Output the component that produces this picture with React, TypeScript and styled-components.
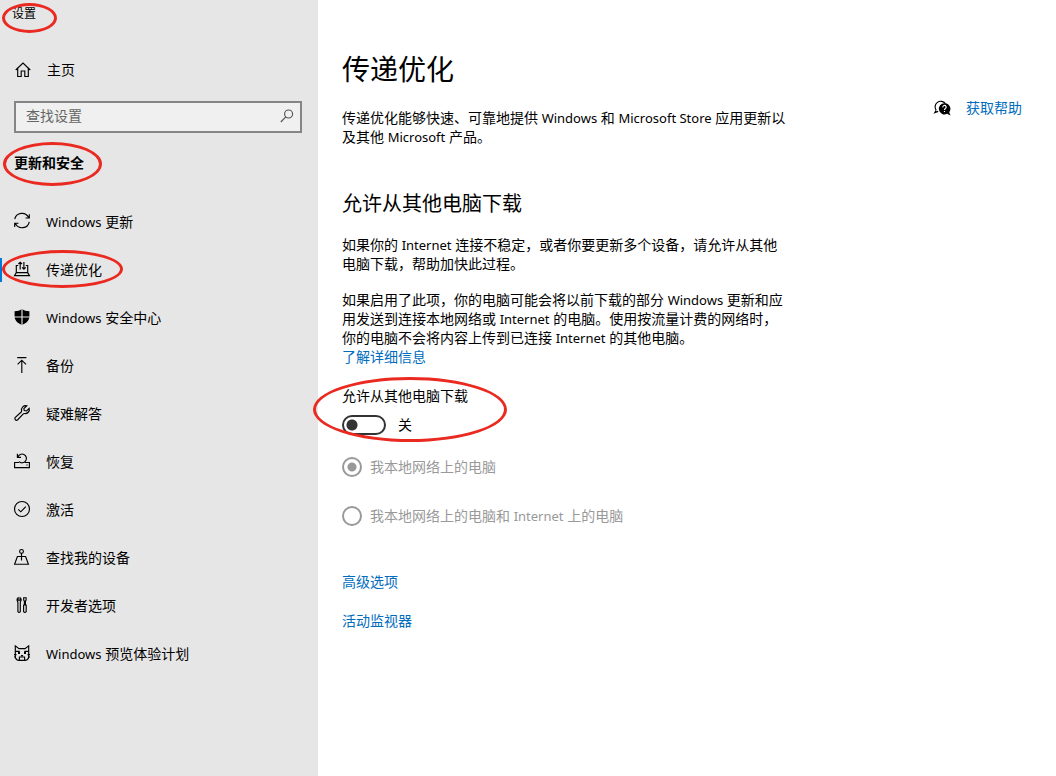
import React from 'react';
import styled, { createGlobalStyle, css } from 'styled-components';

const GlobalStyle = createGlobalStyle`
  *, *::before, *::after { box-sizing: border-box; }
  body {
    margin: 0;
    background: #fff;
    color: #000;
    font: 14px/20px "Open Sans", "Noto Sans CJK SC", sans-serif;
  }
  h1, h2, p { margin: 0; font-weight: 400; }
`;

const Page = styled.div`
  display: flex;
  min-height: 100vh;
`;

const Sidebar = styled.aside`
  flex: 0 0 318px;
  background: #e6e6e6;
`;

const WindowTitle = styled.div`
  position: relative;
  padding: 4px 12px 0;
  font-size: 12px;
`;

const HomeLink = styled.a`
  display: flex;
  align-items: center;
  gap: 16px;
  margin-top: 32px;
  padding: 4px 15px;
  color: inherit;
  text-decoration: none;
`;

const SearchBox = styled.label`
  display: flex;
  align-items: center;
  height: 32px;
  margin: 17px 16px 0 14px;
  padding: 0 5px 2px 10px;
  border: 2px solid #858585;
  background: #f0f0f0;
  color: #555;
`;

const SearchInput = styled.input`
  flex: 1;
  min-width: 0;
  padding: 0;
  border: 0;
  outline: 0;
  background: transparent;
  font: inherit;
  &::placeholder { color: #666; opacity: 1; }
`;

const SectionName = styled.h2`
  position: relative;
  padding: 20px 14px 25px;
  && { font-weight: 700; }
  font-size: 14px;
`;

const NavItem = styled.a<{ $active?: boolean }>`
  position: relative;
  display: flex;
  align-items: center;
  gap: 16px;
  height: 48px;
  padding: 0 14px;
  color: inherit;
  text-decoration: none;
  ${p => p.$active && css`
    &::before {
      content: "";
      position: absolute;
      left: 0;
      top: 12px;
      width: 2px;
      height: 24px;
      background: #0078d7;
    }
  `}
`;

const Icon = styled.svg`
  flex: none;
  width: 16px;
  height: 16px;
  overflow: visible;
  fill: none;
  stroke: currentColor;
  stroke-width: 1.15;
`;

const Latin = styled.span`
  font-family: "Noto Sans", sans-serif;
  font-size: 13px;
  line-height: 1;
`;

const Main = styled.main`
  flex: 1;
  display: flex;
  justify-content: space-between;
  align-items: flex-start;
  padding: 51px 34px 40px 24px;
`;

const Content = styled.div`
  white-space: nowrap;
`;

const Title = styled.h1`
  font-size: 28px;
  line-height: 36px;
`;

const Paragraph = styled.p<{ $gap: number }>`
  margin-top: ${p => p.$gap}px;
  line-height: 19px;
`;

const Subtitle = styled.h2`
  margin-top: 44px;
  font-size: 20px;
  line-height: 28px;
`;

const Link = styled.a`
  color: #006cbe;
  text-decoration: none;
`;

const ToggleGroup = styled.div`
  position: relative;
  margin-top: 20px;
`;

const ToggleLabel = styled.label`
  display: block;
`;

const ToggleRow = styled.div`
  display: flex;
  align-items: center;
  gap: 12px;
  margin-top: 9px;
`;

const Toggle = styled.input`
  appearance: none;
  width: 44px;
  height: 20px;
  margin: 0;
  border: 2px solid #333;
  border-radius: 10px;
  background: radial-gradient(circle at 8px 8px, #333 5px, transparent 6px);
  &:checked {
    border-color: #0078d7;
    background: radial-gradient(circle at 32px 8px, #fff 5px, #0078d7 6px);
  }
`;

const Options = styled.div`
  display: grid;
  gap: 29px;
  margin-top: 22px;
`;

const Option = styled.label`
  display: flex;
  align-items: center;
  gap: 8px;
  color: #999;
`;

const Radio = styled.input`
  appearance: none;
  width: 20px;
  height: 20px;
  margin: 0;
  border: 2px solid #999;
  border-radius: 50%;
  &:checked { background: radial-gradient(circle, #999 4px, transparent 5px); }
`;

const Links = styled.div`
  display: grid;
  justify-items: start;
  gap: 19px;
  margin-top: 46px;
`;

const Help = styled(Link)`
  display: flex;
  align-items: center;
  gap: 16px;
  margin-top: 47px;
  white-space: nowrap;
  svg { color: #000; }
`;

const Ring = styled.span<{ $x: number; $y: number; $w: number; $h: number }>`
  position: absolute;
  z-index: 1;
  left: ${p => p.$x}px;
  top: ${p => p.$y}px;
  width: ${p => p.$w}px;
  height: ${p => p.$h}px;
  border: 3px solid #ea2a20;
  border-radius: 50%;
  pointer-events: none;
`;

type NavEntry = { label: React.ReactNode; icon: React.ReactNode; active?: boolean };

const entries: NavEntry[] = [
  {
    label: <><Latin>Windows</Latin> 更新</>,
    icon: <path d="M.7 6.2A7.4 7.4 0 0 1 14.6 4.6M15.3 1.2V5H11.5M15.3 8.8A7.4 7.4 0 0 1 1.4 10.6M.7 14V10.2H4.5" />,
  },
  {
    label: '传递优化',
    active: true,
    icon: <path d="M4.2 4.5H2.3V11.6M11.8 4.5H13.7V11.6M2.3 11.6H13.7L15.5 14.6H.5ZM6.2 8.6V1.2M4.4 3L6.2 1.2L8 3M9.9 1V8.2M8.1 6.4L9.9 8.2L11.7 6.4" />,
  },
  {
    label: <><Latin>Windows</Latin> 安全中心</>,
    icon: (
      <>
        <path fill="currentColor" stroke="none" d="M8 0C6 1.5 3.5 2.2.6 2.2V7.5C.6 11.5 4 14.5 8 16C12 14.5 15.4 11.5 15.4 7.5V2.2C12.5 2.2 10 1.5 8 0Z" />
        <path stroke="#e6e6e6" d="M8 0V16M0 8H16" />
      </>
    ),
  },
  { label: '备份', icon: <path d="M3.2 .6H12.4M7.8 16V3.2M3.6 7.4L7.8 3.2L12 7.4" /> },
  {
    label: '疑难解答',
    icon: <path d="M12.8 .8A4.2 4.2 0 0 0 7.6 5.8C7.6 6.4 7.5 6.7 7.2 7L1.1 12.6A1.75 1.75 0 0 0 3.5 15L9.3 8.8C9.6 8.5 10 8.4 10.5 8.5A4.1 4.1 0 0 0 15.2 3.4L12.6 6L10.2 5.6L9.9 3.5Z" />,
  },
  {
    label: '恢复',
    icon: <path d="M5 9.5H.6V14.6H15.4V9.5H11M12.4 12H13.6M3.4 .8V4.4H7M3.8 4.2A4.4 4.4 0 1 1 5 8.6" />,
  },
  { label: '激活', icon: <><circle cx="8" cy="8" r="7.5" /><path d="M4.2 8.3L6.8 10.8L11.8 5.6" /></> },
  {
    label: '查找我的设备',
    icon: <><circle cx="7.5" cy="2.4" r="1.9" /><path d="M7.5 4.3V11.6M3.4 7.5H11.6L14.4 15.2H.6Z" /></>,
  },
  {
    label: '开发者选项',
    icon: <path d="M4.1 .7V3.2H6.1V.7C7.3 1.4 7.6 3.8 6.3 5V14.6Q5.1 16.2 3.9 14.6V5C2.6 3.8 2.9 1.4 4.1 .7ZM9.7 .7H12.1V3L11.4 4.2V8H10.4V4.2L9.7 3ZM9.2 8H12.6M9.6 8V14.6Q10.9 16.2 12.2 14.6V8" />,
  },
  {
    label: <><Latin>Windows</Latin> 预览体验计划</>,
    icon: (
      <>
        <path d="M1.3 12.5V.8L5 3.6H11L14.7 .8V12.5Q13.5 15.4 11 15.4H5Q2.5 15.4 1.3 12.5ZM1.3 6.4H5.6M10.4 6.4H14.7M5.4 15.2V12H10.6V15.2M0 9.6H2.5M13.5 9.6H16M0 12H2M14 12H16" />
        <path fill="currentColor" stroke="none" d="M4 6.6H6V9H4ZM10 6.6H12V9H10ZM6.6 10H9.4L8 12.2Z" />
      </>
    ),
  },
];

export default function App() {
  return (
    <Page>
      <GlobalStyle />
      <Sidebar>
        <WindowTitle>
          设置
          <Ring $x={2} $y={3} $w={55} $h={30} />
        </WindowTitle>
        <HomeLink href="#home">
          <Icon viewBox="0 0 16 16" aria-hidden="true">
            <path d="M.7 8L8 1L15.3 8M2.7 6.2V14.5H6.2V9H9.8V14.5H13.3V6.2" />
          </Icon>
          主页
        </HomeLink>
        <SearchBox>
          <SearchInput type="text" placeholder="查找设置" aria-label="查找设置" />
          <Icon viewBox="0 0 16 16" aria-hidden="true">
            <circle cx="9.6" cy="6" r="4" />
            <path d="M6.8 8.9L1.8 14" />
          </Icon>
        </SearchBox>
        <SectionName>
          更新和安全
          <Ring $x={3} $y={9} $w={99} $h={44} />
        </SectionName>
        <nav>
          {entries.map((entry, i) => (
            <NavItem key={i} href="#settings" $active={entry.active} aria-current={entry.active ? 'page' : undefined}>
              <Icon viewBox="0 1 16 16" aria-hidden="true">{entry.icon}</Icon>
              <span>{entry.label}</span>
              {entry.active && <Ring $x={2} $y={4} $w={121} $h={38} />}
            </NavItem>
          ))}
        </nav>
      </Sidebar>
      <Main>
        <Content>
          <Title>传递优化</Title>
          <Paragraph $gap={21}>
            传递优化能够快速、可靠地提供 <Latin>Windows</Latin> 和 <Latin>Microsoft Store</Latin> 应用更新以<br />
            及其他 <Latin>Microsoft</Latin> 产品。
          </Paragraph>
          <Subtitle>允许从其他电脑下载</Subtitle>
          <Paragraph $gap={17}>
            如果你的 <Latin>Internet</Latin> 连接不稳定，或者你要更新多个设备，请允许从其他<br />
            电脑下载，帮助加快此过程。
          </Paragraph>
          <Paragraph $gap={17}>
            如果启用了此项，你的电脑可能会将以前下载的部分 <Latin>Windows</Latin> 更新和应<br />
            用发送到连接本地网络或 <Latin>Internet</Latin> 的电脑。使用按流量计费的网络时，<br />
            你的电脑不会将内容上传到已连接 <Latin>Internet</Latin> 的其他电脑。<br />
            <Link href="#details">了解详细信息</Link>
          </Paragraph>
          <ToggleGroup>
            <ToggleLabel htmlFor="allow">允许从其他电脑下载</ToggleLabel>
            <ToggleRow>
              <Toggle id="allow" type="checkbox" role="switch" />
              <span>关</span>
            </ToggleRow>
            <Ring $x={-29} $y={-9} $w={194} $h={65} />
          </ToggleGroup>
          <Options>
            <Option>
              <Radio type="radio" name="source" defaultChecked disabled />
              <span>我本地网络上的电脑</span>
            </Option>
            <Option>
              <Radio type="radio" name="source" disabled />
              <span>我本地网络上的电脑和 <Latin>Internet</Latin> 上的电脑</span>
            </Option>
          </Options>
          <Links>
            <Link href="#advanced">高级选项</Link>
            <Link href="#monitor">活动监视器</Link>
          </Links>
        </Content>
        <Help href="#help">
          <Icon viewBox="0 0 16 16" aria-hidden="true">
            <path d="M2 10.6L.8 12.6L4.2 11.4M2.2 10.4A5.6 5.6 0 1 1 11.4 3.6" />
            <path fill="currentColor" stroke="none" d="M10.4 3.2A5.6 5.6 0 1 0 13 13.8L16.6 15.6L15.2 12.2A5.6 5.6 0 0 0 10.4 3.2Z" />
            <path stroke="#fff" d="M8.8 7.4A1.7 1.7 0 1 1 11.4 8.6Q10.5 9 10.5 10M10.5 11V12.1" />
          </Icon>
          获取帮助
        </Help>
      </Main>
    </Page>
  );
}
